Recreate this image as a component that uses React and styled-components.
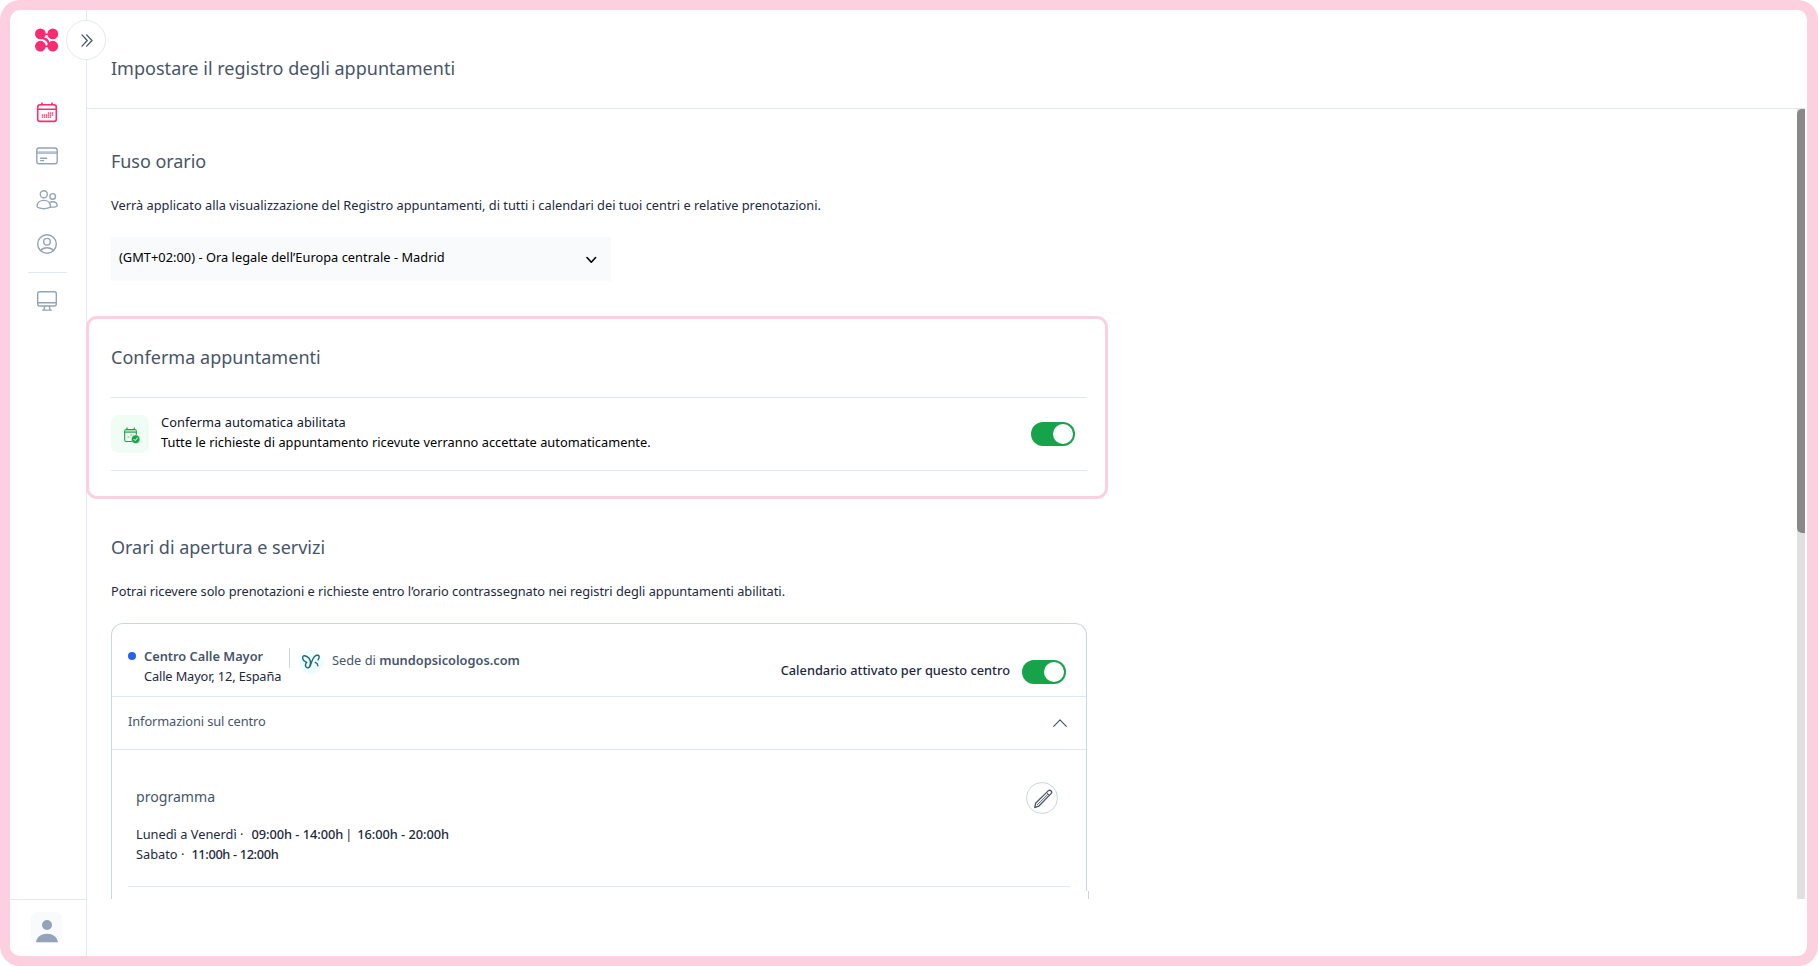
import React from "react";
import styled, { createGlobalStyle, css } from "styled-components";

const color = {
  frame: "#fdd0df",
  brand: "#fb2c71",
  line: "#e2e8f0",
  cardLine: "#cbd5e1",
  icon: "#94a3b8",
  muted: "#475569",
  text: "#1e293b",
  green: "#16a34a",
};

const GlobalStyle = createGlobalStyle`
  *, *::before, *::after { box-sizing: border-box; }
  body {
    margin: 0;
    background: #fff;
    color: ${color.text};
    font-family: "Noto Sans", "Open Sans", sans-serif;
    font-size: 12.8px;
    line-height: 20px;
  }
  h1, h2, h3, p { margin: 0; font-weight: 400; }
  button { font: inherit; padding: 0; }
  svg { display: block; flex: none; }
`;

const Frame = styled.div`
  display: flex;
  width: 1818px;
  height: 966px;
  border: 10px solid ${color.frame};
  border-right-width: 11px;
  border-radius: 20px;
  overflow: hidden;
  background: #fff;
`;

/* ---------- sidebar ---------- */

const Sidebar = styled.aside`
  position: relative;
  display: flex;
  flex-direction: column;
  flex: none;
  width: 77px;
  border-right: 1px solid ${color.line};
`;

const LogoSlot = styled.div`
  padding: 18px 0 0 25px;
  height: 90px;
`;

const ExpandButton = styled.button`
  position: absolute;
  top: 10px;
  right: -20px;
  z-index: 2;
  display: grid;
  place-items: center;
  width: 40px;
  height: 40px;
  padding-left: 2px;
  border: 1px solid ${color.line};
  border-radius: 50%;
  background: #fff;
  color: ${color.muted};
`;

const Nav = styled.nav`
  display: flex;
  flex-direction: column;
  align-items: center;
  gap: 20px;
  padding-right: 2px;
`;

const NavItem = styled.a`
  color: ${(p) => (p.$active ? color.brand : color.icon)};
`;

const NavDivider = styled.hr`
  width: 39px;
  height: 1px;
  margin: -4px 0;
  border: 0;
  background: ${color.line};
`;

const SidebarFooter = styled.div`
  display: flex;
  justify-content: center;
  margin-top: auto;
  height: 57px;
  padding: 12px 3px 0 0;
  border-top: 1px solid ${color.line};
`;

const Avatar = styled.div`
  display: flex;
  align-items: flex-end;
  justify-content: center;
  width: 31px;
  height: 31px;
  border-radius: 6px;
  background: #f8fafc;
  color: ${color.icon};
`;

/* ---------- main column ---------- */

const Main = styled.main`
  display: flex;
  flex-direction: column;
  flex: 1;
  min-width: 0;
  margin-right: 2px;
`;

const Header = styled.header`
  flex: none;
  height: 99px;
  padding: 44px 24px 0;
  border-bottom: 1px solid ${color.line};
`;

const headingStyle = css`
  font-size: 18px;
  line-height: 28px;
  color: ${color.muted};
  letter-spacing: ${(p) => p.$track || 0}px;
`;

const Title = styled.h1`
  ${headingStyle}
`;

const Heading = styled.h2`
  ${headingStyle}
`;

const ScrollRow = styled.div`
  position: relative;
  display: flex;
  flex: none;
  height: 790px;
  margin-left: -1px;
`;

const ScrollArea = styled.div`
  flex: 1;
  overflow: hidden;
`;

const Scrollbar = styled.div`
  width: 8px;
  background: #e0e0e0;
`;

const Thumb = styled.div`
  height: 424px;
  border-radius: 5px 0 0 5px;
  background: #888;
`;

const Section = styled.section`
  width: 1001px;
  padding: ${(p) => p.$top}px 0 0 25px;
`;

const Lead = styled.p`
  margin: 20px 0 22px;
  letter-spacing: ${(p) => p.$track || 0}px;
`;

const Select = styled.div`
  display: flex;
  justify-content: space-between;
  width: 500px;
  height: 44px;
  padding: 10px 14px 0 8px;
  background: #f8fafc;
  color: #000;
  letter-spacing: 0.03px;
`;

const SelectIcon = styled.span`
  display: flex;
  align-items: center;
  height: 26px;
`;

const HighlightSection = styled.section`
  width: 1022px;
  height: 183px;
  margin-top: 35px;
  padding: 24px 18px 0 22px;
  border: 3px solid ${color.frame};
  border-radius: 11px;
  background: #fff;
`;

const ConfirmRow = styled.div`
  display: flex;
  align-items: center;
  gap: 12px;
  width: 976px;
  height: 74px;
  margin-top: 26px;
  padding-right: 12px;
  border-top: 1px solid ${color.line};
  border-bottom: 1px solid ${color.line};
`;

const ConfirmIcon = styled.div`
  display: grid;
  place-items: center;
  width: 38px;
  height: 38px;
  padding: 2px 0 0 3px;
  border-radius: 8px;
  background: #f0fdf4;
`;

const ConfirmText = styled.div`
  flex: 1;
  padding-bottom: 4px;
  color: #000;
`;

const Label = styled.p`
  color: ${(p) => (p.$dark ? "#0f172a" : "inherit")};
  font-weight: ${(p) => p.$weight || 400};
  letter-spacing: ${(p) => p.$track || 0}px;
`;

const Switch = styled.div`
  display: flex;
  justify-content: flex-end;
  flex: none;
  width: 44px;
  height: 24px;
  padding: 2px;
  border-radius: 12px;
  background: ${color.green};

  &::after {
    content: "";
    width: 20px;
    height: 20px;
    border-radius: 50%;
    background: #fff;
  }
`;

/* ---------- centre card ---------- */

const Card = styled.article`
  width: 976px;
  height: 268px;
  border: 1px solid ${color.cardLine};
  border-bottom: 0;
  border-radius: 12px 12px 0 0;
`;

const CardNext = styled.div`
  width: 978px;
  height: 8px;
  border: solid ${color.cardLine};
  border-width: 0 1px;
`;

const CardHead = styled.div`
  display: flex;
  align-items: flex-start;
  height: 73px;
  padding: 22px 20px 0 16px;
  border-bottom: 1px solid ${color.line};
`;

const Dot = styled.span`
  width: 8px;
  height: 8px;
  margin: 6px 8px 0 0;
  border-radius: 50%;
  background: #2563eb;
`;

const Place = styled.div`
  width: 145px;
  white-space: nowrap;
`;

const Strong = styled.strong`
  color: ${color.muted};
  font-weight: 600;
`;

const Site = styled.div`
  display: flex;
  align-items: flex-start;
  flex: 1;
  color: ${color.muted};

  &::before {
    content: "";
    width: 1px;
    height: 20px;
    margin: 2px 9px 0 0;
    background: ${color.cardLine};
  }
`;

const SiteIcon = styled.span`
  display: grid;
  place-items: center;
  width: 24px;
  height: 24px;
  margin: 4px 9px 0 0;
  border-radius: 50%;
  background: #ecfeff;
`;

const SiteText = styled.span`
  padding-top: 4px;
`;

const SwitchField = styled.div`
  display: flex;
  gap: 12px;
  padding-top: 14px;
`;

const Accordion = styled.div`
  display: flex;
  justify-content: space-between;
  height: 53px;
  padding: 14px 19px 0 16px;
  border-bottom: 1px solid ${color.line};
  color: ${color.muted};
  letter-spacing: -0.09px;
`;

const Caret = styled.span`
  padding-top: 8px;
`;

const Schedule = styled.div`
  display: flex;
  justify-content: space-between;
  height: 137px;
  margin: 0 16px;
  padding: 32px 12px 0 8px;
  border-bottom: 1px solid ${color.line};
`;

const ScheduleTitle = styled.h3`
  margin: 3px 0 15px;
  font-size: 14.1px;
  line-height: 24px;
  color: ${color.muted};
`;

const HoursLine = styled.p`
  white-space: pre;
`;

const Hours = styled.span`
  margin: 0 2px 0 ${(p) => p.$gap ?? 8}px;
  font-weight: 500;
  letter-spacing: ${(p) => p.$track ?? -0.04}px;
`;

const EditButton = styled.button`
  display: grid;
  place-items: center;
  width: 32px;
  height: 32px;
  padding: 2px 0 0 2px;
  border: 1px solid ${color.cardLine};
  border-radius: 50%;
  background: #fff;
  color: ${color.muted};
`;

/* ---------- icons ---------- */

const Stroke = ({ w = 24, h = w, width = 1.4, children }) => (
  <svg
    width={w}
    height={h}
    viewBox={`0 0 ${w} ${h}`}
    fill="none"
    stroke="currentColor"
    strokeWidth={width}
    strokeLinecap="round"
    strokeLinejoin="round"
  >
    {children}
  </svg>
);

const Logo = () => (
  <svg width="24" height="24" viewBox="0 0 24 24" fill={color.brand} stroke={color.brand}>
    <g stroke="none">
      <circle cx="5.4" cy="5.9" r="5.4" />
      <circle cx="17.8" cy="5.9" r="5.4" />
      <circle cx="5.4" cy="18.2" r="5.4" />
      <circle cx="17.8" cy="18.2" r="5.4" />
      <path d="M9 9.5C12 9.5 14.5 12.5 14.3 14.5L16 20L9.6 18.8C11 18.6 13 18 12.6 15.5C12.2 13 10 12 7 11Z" />
    </g>
    <path d="M9 6.2H14M9 18.2H14" strokeWidth="1.6" />
  </svg>
);

const CalendarIcon = () => (
  <Stroke width={1.6}>
    <rect x="2.7" y="4.8" width="18.6" height="16.6" rx="2.4" />
    <path d="M2.7 9.2h18.6M7 4.6V3M17 4.6V3" />
    <g fill="currentColor" stroke="none">
      {[
        [13, 0], [15, 0], [17, 0],
        [7, 2], [9, 2], [11, 2], [13, 2], [15, 2], [17, 2],
        [7, 4], [9, 4], [11, 4], [13, 4], [15, 4],
      ].map(([x, y]) => (
        <rect key={`${x}-${y}`} x={x - 0.2} y={12.4 + y} width="1.4" height="1.4" />
      ))}
    </g>
  </Stroke>
);

const CardIcon = () => (
  <Stroke>
    <rect x="1.8" y="4" width="20.4" height="15.8" rx="2.3" />
    <path d="M2 8h20M2 9.2h20" strokeWidth="1" />
    <path d="M5.6 14.2h6M5.6 16.6h3" />
  </Stroke>
);

const UsersIcon = () => (
  <Stroke>
    <circle cx="8.8" cy="6.2" r="3.5" />
    <circle cx="17.7" cy="8.4" r="2.8" />
    <path d="M2.1 18.4c0-3.6 2.8-6 6.7-6s6.7 2.4 6.7 6c0 1-3.2 2.3-6.7 2.3s-6.7-1.2-6.7-2.3z" />
    <path d="M14.4 14.7c.9-.7 2-1 3.3-1 2.6 0 4.5 1.6 4.5 4 0 .9-2.9 1.7-6.7 1.4" />
  </Stroke>
);

const ProfileIcon = () => (
  <Stroke>
    <circle cx="12" cy="12" r="9.3" />
    <circle cx="12" cy="9.7" r="3.3" />
    <path d="M5.5 18.600c1.500-2 3.800-2.900 6.500-2.900s5 .9 6.500 2.900" />
  </Stroke>
);

const MonitorIcon = () => (
  <Stroke>
    <rect x="2.7" y="2.7" width="18.6" height="14.3" rx="2" />
    <path d="M2.8 13.7h18.400M9.700 17.200l-.6 3.500M14.300 17.200l.6 3.500M7.600 21.100h8.800" />
  </Stroke>
);

const PersonIcon = () => (
  <svg width="22" height="24" viewBox="0 0 22 24" fill="currentColor">
    <circle cx="11" cy="6" r="5" />
    <path d="M0.2 22.2C1.4 17.5 5.5 14.7 11 14.7s9.600 2.800 10.800 7.500c.1.700-.2 1-.8 1H1c-.6 0-.9-.3-.8-1z" />
  </svg>
);

const ConfirmCalendarIcon = () => (
  <svg width="16" height="17" viewBox="0 0 16 17" fill="none" stroke={color.green} strokeLinecap="round">
    <rect x="0.7" y="2.5" width="11.6" height="12" rx="1.6" strokeWidth="1.1" />
    <path d="M1.2 3.2h10.6v1.5H1.2z" fill="#86d6a2" stroke="none" />
    <path d="M1 5.2h11.2" strokeWidth="1" />
    <path d="M3 2V.9M10.3 2V.9" strokeWidth="1.2" />
    <path d="M6.5 8h3M3.5 10h2.8" strokeWidth="1.3" strokeOpacity="0.6" strokeDasharray="1.2 1" strokeLinecap="butt" />
    <circle cx="11.7" cy="12.2" r="4.3" fill={color.green} stroke="#f0fdf4" strokeWidth="0.5" />
    <path d="M10 12.4l1.2 1.2 2.2-2.7" stroke="#fff" strokeWidth="1" />
  </svg>
);

const ButterflyIcon = () => (
  <Stroke w={18} h={16} width={1.4}>
    <g stroke="#256478">
      <path d="M4.6 8.4C2.3 7.4.5 5 .7 3.200c.1-1.400 1.500-1.700 2.900-1.200 2.400.8 4.300 2.800 4.800 5.500.2 1.600.1 2.900-.4 4.300" />
      <path d="M4.600 8.400c-1.200 1.500-1.500 3.400-.4 4.700 1 1.200 2.900.9 3.700-.7C9.600 9.500 9.900 4.500 12.900 2.200c1.300-1 3.600-1.400 4.100-.2.400 1-.2 2.700-1 4" />
      <path d="M13.200 8.400c1.700.6 2.600 1.700 2.700 3.300" />
    </g>
  </Stroke>
);

const PencilIcon = () => (
  <Stroke w={20} width={1.3}>
    <path d="M1.7 18.6l.9-4.3L15.2 1.9c.8-.8 2-.8 2.800-.1.800.8.800 2 0 2.800L5.700 17.200z" />
    <path d="M13.600 3.600l2.800 2.800M4.300 15.700L15 5.300" strokeWidth="0.9" />
  </Stroke>
);

/* ---------- page ---------- */

export default function App() {
  return (
    <>
      <GlobalStyle />
      <Frame>
        <Sidebar>
          <LogoSlot>
            <Logo />
          </LogoSlot>
          <ExpandButton aria-label="Espandi">
            <Stroke w={12} h={13} width={1.3}>
              <path d="M1 .9l5.200 5.600L1 12.100M5.600 .9l5.400 5.600-5.400 5.600" />
            </Stroke>
          </ExpandButton>
          <Nav>
            <NavItem $active><CalendarIcon /></NavItem>
            <NavItem><CardIcon /></NavItem>
            <NavItem><UsersIcon /></NavItem>
            <NavItem><ProfileIcon /></NavItem>
            <NavDivider />
            <NavItem><MonitorIcon /></NavItem>
          </Nav>
          <SidebarFooter>
            <Avatar><PersonIcon /></Avatar>
          </SidebarFooter>
        </Sidebar>

        <Main>
          <Header>
            <Title $track={0.02}>Impostare il registro degli appuntamenti</Title>
          </Header>
          <ScrollRow>
            <ScrollArea>
              <Section $top={38}>
                <Heading $track={-0.05}>Fuso orario</Heading>
                <Lead>
                  Verrà applicato alla visualizzazione del Registro appuntamenti, di tutti i calendari
                  dei tuoi centri e relative prenotazioni.
                </Lead>
                <Select>
                  <span>(GMT+02:00) - Ora legale dell’Europa centrale - Madrid</span>
                  <SelectIcon>
                    <Stroke w={11} h={8} width={1.6}>
                      <path d="M1 1.500l4.300 4.700 4.300-4.700" />
                    </Stroke>
                  </SelectIcon>
                </Select>
              </Section>

              <HighlightSection>
                <Heading $track={0.03}>Conferma appuntamenti</Heading>
                <ConfirmRow>
                  <ConfirmIcon><ConfirmCalendarIcon /></ConfirmIcon>
                  <ConfirmText>
                    <Label $dark $track={0.07}>Conferma automatica abilitata</Label>
                    <Label $track={0.02}>
                      Tutte le richieste di appuntamento ricevute verranno accettate automaticamente.
                    </Label>
                  </ConfirmText>
                  <Switch role="switch" aria-checked="true" />
                </ConfirmRow>
              </HighlightSection>

              <Section $top={34}>
                <Heading $track={-0.02}>Orari di apertura e servizi</Heading>
                <Lead $track={-0.025}>
                  Potrai ricevere solo prenotazioni e richieste entro l’orario contrassegnato nei
                  registri degli appuntamenti abilitati.
                </Lead>
                <Card>
                  <CardHead>
                    <Dot />
                    <Place>
                      <Strong>Centro Calle Mayor</Strong>
                      <Label $track={-0.13}>Calle Mayor, 12, España</Label>
                    </Place>
                    <Site>
                      <SiteIcon><ButterflyIcon /></SiteIcon>
                      <SiteText>
                        Sede di <Strong>mundopsicologos.com</Strong>
                      </SiteText>
                    </Site>
                    <SwitchField>
                      <Label $weight={500}>Calendario attivato per questo centro</Label>
                      <Switch role="switch" aria-checked="true" />
                    </SwitchField>
                  </CardHead>
                  <Accordion>
                    <span>Informazioni sul centro</span>
                    <Caret>
                      <Stroke w={14} h={8} width={1.2}>
                        <path d="M.7 7.300L7 .900l6.300 6.400" />
                      </Stroke>
                    </Caret>
                  </Accordion>
                  <Schedule>
                    <div>
                      <ScheduleTitle>programma</ScheduleTitle>
                      <HoursLine>
                        Lunedì a Venerdì ·<Hours>09:00h - 14:00h</Hours>|<Hours $gap={5}>16:00h - 20:00h</Hours>
                      </HoursLine>
                      <HoursLine>
                        Sabato ·<Hours $gap={7} $track={-0.36}>11:00h - 12:00h</Hours>
                      </HoursLine>
                    </div>
                    <EditButton aria-label="Modifica"><PencilIcon /></EditButton>
                  </Schedule>
                </Card>
                <CardNext />
              </Section>
            </ScrollArea>
            <Scrollbar>
              <Thumb />
            </Scrollbar>
          </ScrollRow>
        </Main>
      </Frame>
    </>
  );
}
